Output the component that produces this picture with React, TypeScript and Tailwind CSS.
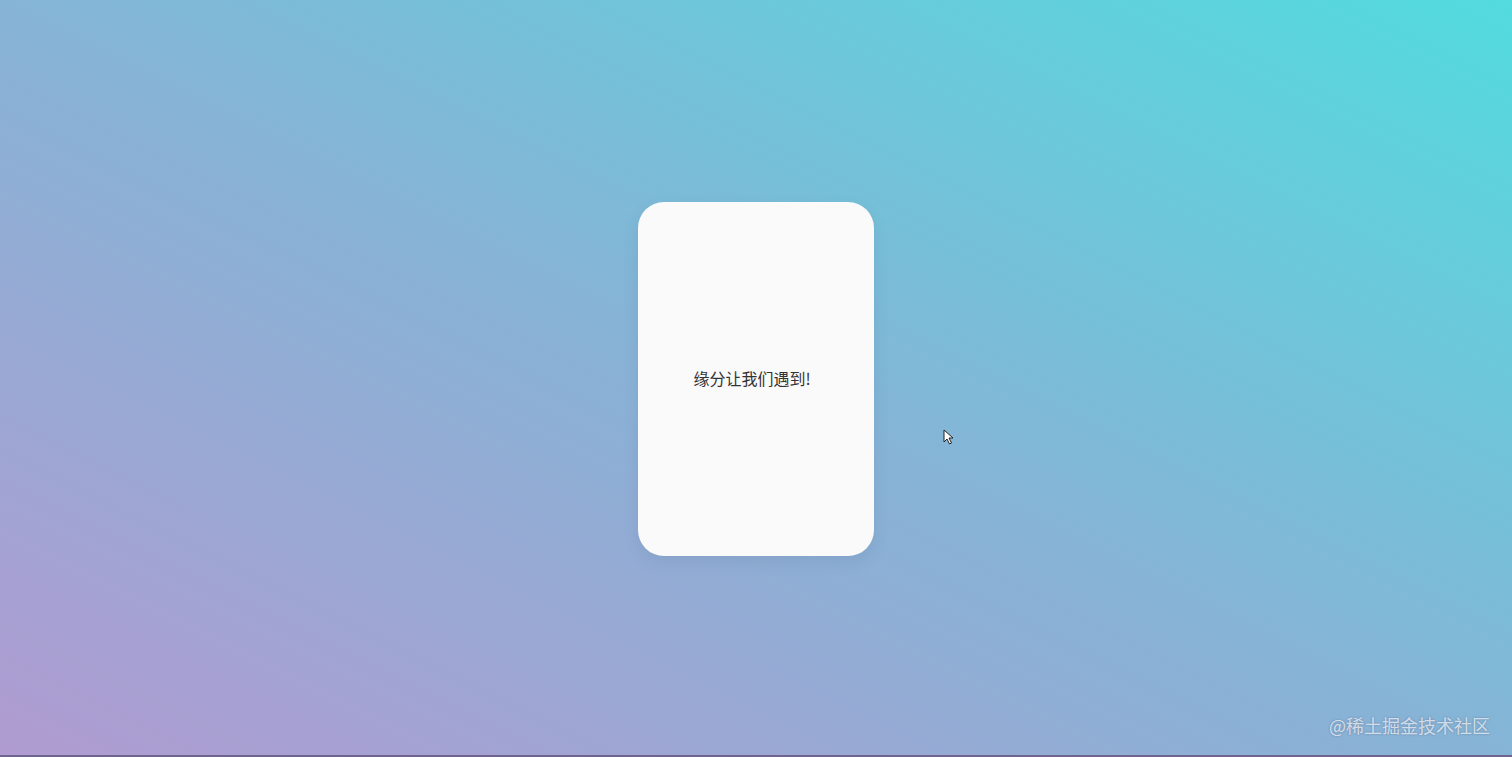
export default function App() {
  return (
    <div className="relative flex h-[757px] w-full items-center justify-center overflow-hidden bg-[linear-gradient(to_top_right,#b09bd1_0%,#86b4d6_50%,#52dbdf_100%)] [font-family:'Noto_Sans_CJK_SC',sans-serif]">
      <div className="flex h-[354px] w-[236px] items-center justify-center rounded-[26px] bg-[#fafafa] shadow-[0_6px_16px_rgba(60,80,120,0.12)]">
        <p className="-translate-x-[4px] -translate-y-[1px] text-[16px] text-[#333]">缘分让我们遇到!</p>
      </div>

      {/* mouse pointer captured in the screenshot */}
      <svg className="absolute left-[943px] top-[429px] h-[16px] w-[12px]" viewBox="0 0 12 16">
        <path d="M1 1 L1 13 L4 10 L6.5 15 L8.5 14 L6 9 L10 9 Z" fill="#fff" stroke="#222" strokeWidth="1" strokeLinejoin="round" />
      </svg>

      <span className="absolute bottom-[18px] right-[22px] text-[18px] text-white/70 [text-shadow:0_0_2px_rgba(60,70,110,0.5)]">
        @稀土掘金技术社区
      </span>
      <div className="absolute bottom-0 left-0 h-[2px] w-full bg-[#6f6390]" />
    </div>
  )
}
